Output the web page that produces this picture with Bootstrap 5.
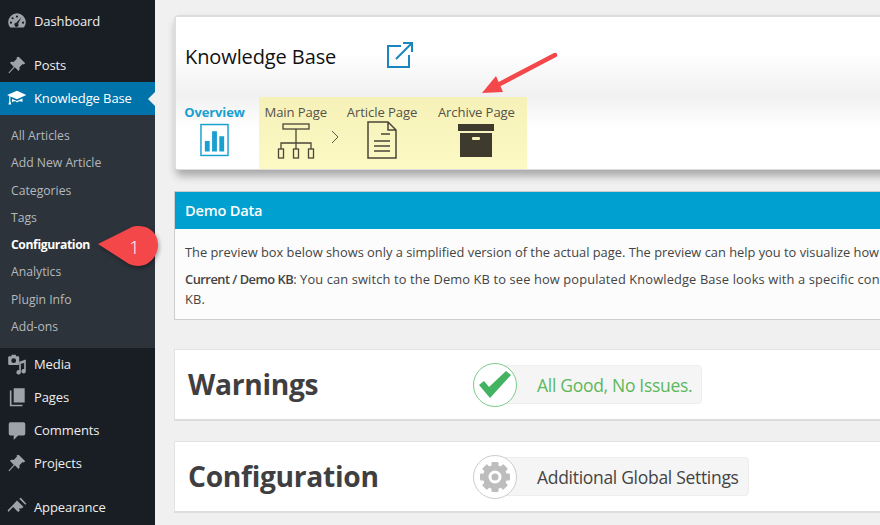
<!DOCTYPE html>
<html lang="en">
<head>
<meta charset="UTF-8">
<title>Knowledge Base</title>
<link href="https://cdn.jsdelivr.net/npm/bootstrap@5.3.0/dist/css/bootstrap.min.css" rel="stylesheet">
<style>
html, body { height: 525px; overflow: hidden; }
body { background: #f0f0f0; font-family: "Open Sans", "Liberation Sans", sans-serif; color: #444; }
.page-wrap { position: relative; width: 880px; height: 525px; overflow: hidden; }
.wp-side { width: 155px; height: 525px; flex: none; background: #191e24; padding-top: 5px; }
.wp-item { height: 33px; color: #eee; font-size: 13px; padding-left: 34px; position: relative; display: flex; align-items: center; letter-spacing: -.1px; }
.wp-item svg { position: absolute; left: 6px; top: 5px; width: 22px; height: 22px; fill: #9ea3a8; }
.wp-gap { margin-top: 11px; }
.wp-current { background: #0073aa; color: #fff; }
.wp-current svg { fill: #fff; }
.wp-current::after { content: ""; position: absolute; right: 0; top: 10px; border: 7px solid transparent; border-left: 0; border-right: 7px solid #f0f0f0; }
.wp-sub { background: #2c333b; height: 233px; padding-top: 7px; }
.wp-sub a { display: block; height: 27.3px; line-height: 27px; padding-left: 11px; font-size: 12.2px; color: #b4b9be; text-decoration: none; }
.wp-sub a.on { color: #fff; font-weight: 700; letter-spacing: -.4px; }
.main-col { width: 800px; flex: none; padding: 15px 0 0 19px; }
.kb-box { background: #fff; border: 2px solid #ddd; border-right: 0; border-radius: 5px 0 0 5px; height: 155px; box-shadow: 2px 6px 8px rgba(0,0,0,.3); }
.kb-head { height: 80px; background: linear-gradient(#fff 45%, #f0f0f0); padding-left: 9px; padding-bottom: 1px; }
.kb-title { font-size: 20px; color: #111; width: 201px; letter-spacing: -.1px; }
.ext-ico { margin-bottom: 3px; }
.kb-tabs { height: 72px; background: linear-gradient(#f2f2f2, #fff 45%); }
.tab-over { width: 83px; text-align: center; padding: 8px 6px 0 0; }
.tab-over b { display: block; font-size: 13px; color: #1a9fd1; letter-spacing: -.1px; line-height: 15px; margin-bottom: 3px; }
.tab-yellow { width: 268px; background: linear-gradient(#f5f1b8, #fdf9c4); height: 72px; padding: 8px 5px 0; color: #55524a; font-size: 13.1px; line-height: 15px; letter-spacing: -.1px; }
.tab-one { text-align: center; white-space: nowrap; }
.tab-one svg { display: block; margin: 3px auto 0; }
.tab-one .doc-ico { margin-top: 1px; }
.tab-sep { width: 19px; padding-left: 4px; }
.demo-box { margin-top: 21px; background: #fcfcfc; border: 1px solid #ccc; border-right: 0; height: 129px; }
.demo-head { background: #00a0d0; color: #fff; height: 37px; line-height: 37px; padding-left: 10px; font-size: 14.6px; font-weight: 600; letter-spacing: -.2px; }
.demo-body { padding: 13px 0 0 10px; font-size: 12.85px; line-height: 20px; color: #444; white-space: nowrap; }
.demo-body p { margin: 0 0 7px; }
.demo-body .demo-two { letter-spacing: .13px; }
.demo-two b { letter-spacing: -.5px; }
.sect-box { background: #fff; border: 1px solid #e2e2e2; border-bottom: 2px solid #ddd; border-right: 0; height: 72px; margin-top: 29px; padding-left: 13px; }
.sect-box + .sect-box { margin-top: 20px; }
.sect-title { font-size: 28.2px; font-weight: 700; color: #3f3f42; width: 285px; letter-spacing: -.3px; }
.pill-wrap { position: relative; height: 44px; display: flex; align-items: center; }
.pill-circ { width: 44px; height: 44px; border-radius: 50%; background: #fff; border: 1px solid #ccc; display: flex; align-items: center; justify-content: center; position: relative; z-index: 1; flex: none; }
.pill-text { background: #f5f5f5; border: 1px solid #eee; border-radius: 4px; height: 39px; line-height: 38px; font-size: 17.5px; margin-left: -22px; padding: 0 9px 0 41px; letter-spacing: -.3px; }
.txt-green { color: #5cb85c; }
.circ-green { border-color: #7ccb8a; }
.callout { position: absolute; left: 97px; top: 226px; filter: drop-shadow(1px 2px 2px rgba(0,0,0,.35)); }
.callout-num { position: absolute; left: 129px; top: 234px; color: #fff; font-size: 19px; line-height: 26px; font-weight: 300; }
.red-arrow { position: absolute; left: 480px; top: 50px; }
</style>
</head>
<body>
<div class="page-wrap d-flex">
  <div class="wp-side">
    <div class="wp-item">
      <svg viewBox="0 0 20 20"><path fill-rule="evenodd" d="M10 3a8 8 0 0 0-8 8c0 2 .7 3.800 2 5h12c1.300-1.200 2-3 2-5a8 8 0 0 0-8-8zM6 6.500a1 1 0 1 1 0 2 1 1 0 0 1 0-2zm4-1.500a1 1 0 1 1 0 2 1 1 0 0 1 0-2zM4.500 10.500a1 1 0 1 1 0 2 1 1 0 0 1 0-2zm11 0a1 1 0 1 1 0 2 1 1 0 0 1 0-2zM14 6.500l-3 6a1.800 1.800 0 1 1-1.600-.8z"/></svg>
      Dashboard
    </div>
    <div class="wp-item wp-gap">
      <svg viewBox="0 0 20 20"><path d="M11.500 2.500l6 6-1.300 1-1-.5-3 3c.5 2-.2 3-.7 3.500L8 12l-5 5.500-.8-.5 4.800-5.500-3.500-3.500c.5-.5 1.700-1.200 3.500-.8l3-3-.5-1z"/></svg>
      Posts
    </div>
    <div class="wp-item wp-current">
      <svg viewBox="0 0 20 20"><path d="M10 3.500L1 7.200l2 .9V13l-.8 3h2.600L4 13V8.600l6 2.600 8.500-4z"/><path d="M5.500 10.800v3c2-1.300 3.500-.9 4.500.4 1.500-1.300 3-1.600 5-.6v-3.200l-5 2.300z"/></svg>
      Knowledge Base
    </div>
    <div class="wp-sub">
      <a href="#">All Articles</a>
      <a href="#">Add New Article</a>
      <a href="#">Categories</a>
      <a href="#">Tags</a>
      <a href="#" class="on">Configuration</a>
      <a href="#">Analytics</a>
      <a href="#">Plugin Info</a>
      <a href="#">Add-ons</a>
    </div>
    <div class="wp-item">
      <svg viewBox="0 0 20 20"><path fill-rule="evenodd" d="M3 3h2V1.500h4V3h2a1 1 0 0 1 1 1v6a1 1 0 0 1-1 1H3a1 1 0 0 1-1-1V4a1 1 0 0 1 1-1zm4 1.800a2.200 2.200 0 1 0 0 4.400 2.200 2.200 0 0 0 0-4.400z"/><path d="M18 6v10.500a2 2 0 1 1-1.500-1.900V9l-3 .8v7.700a2 2 0 1 1-1.500-1.900V8z"/></svg>
      Media
    </div>
    <div class="wp-item">
      <svg viewBox="0 0 20 20"><path d="M7 2h10v13H7zM5 4v13h10v1.500H3.500V4z"/></svg>
      Pages
    </div>
    <div class="wp-item">
      <svg viewBox="0 0 20 20"><path d="M4 3h12a1.500 1.500 0 0 1 1.500 1.500v9A1.500 1.500 0 0 1 16 15h-5l-4 4v-4H4a1.500 1.500 0 0 1-1.500-1.500v-9A1.500 1.500 0 0 1 4 3z"/></svg>
      Comments
    </div>
    <div class="wp-item">
      <svg viewBox="0 0 20 20"><path d="M11.500 2.500l6 6-1.300 1-1-.5-3 3c.5 2-.2 3-.7 3.500L8 12l-5 5.500-.8-.5 4.800-5.500-3.500-3.500c.5-.5 1.700-1.200 3.500-.8l3-3-.5-1z"/></svg>
      Projects
    </div>
    <div class="wp-item wp-gap">
      <svg viewBox="0 0 20 20"><path d="M10 4l6 6-2.500 1.500-1.500-.5.500 2.500-1.500 1-4.500-4.500-4.500 4.500L1.500 13 6 8.500 10 4zM12 2.500l5.500 5.500 1-1L13.500 1.500z"/></svg>
      Appearance
    </div>
  </div>

  <div class="main-col">
    <div class="kb-box">
      <div class="kb-head d-flex align-items-center">
        <div class="kb-title">Knowledge Base</div>
        <svg class="ext-ico" width="28" height="28" viewBox="0 0 28 28" fill="none" stroke="#1a86c0" stroke-width="2"><path d="M15 5H2v21h21V14"/><path d="M10 18L26 2M17 2h9v9"/></svg>
      </div>
      <div class="kb-tabs d-flex">
        <div class="tab-over">
          <b>Overview</b>
          <svg width="29" height="34" viewBox="0 0 30 34"><rect x="1" y="1" width="28" height="32" fill="#fff" stroke="#1a9fd1" stroke-width="1.500"/><path fill="#1a9fd1" d="M5 18h5v11H5zM12.500 8h5v21h-5zM20 13h5v16h-5z"/></svg>
        </div>
        <div class="tab-yellow d-flex">
          <div class="tab-one" style="width:64px">Main Page
            <svg width="38" height="36" viewBox="0 0 38 36" fill="none" stroke="#4a4538" stroke-width="1.300"><rect x="6" y="1" width="26" height="5"/><path d="M19 6v14M4 26v-6h30v6M19 20v6"/><rect x="1.500" y="26" width="5" height="9"/><rect x="16.500" y="26" width="5" height="9"/><rect x="31.500" y="26" width="5" height="9"/></svg>
          </div>
          <div class="tab-sep d-flex align-items-center">
            <svg width="9" height="14" viewBox="0 0 9 14" fill="none" stroke="#5a5648"><path d="M1 1l6 6-6 6"/></svg>
          </div>
          <div class="tab-one" style="width:72px">Article Page
            <svg class="doc-ico" width="30" height="38" viewBox="0 0 30 38" fill="none" stroke="#4a4538" stroke-width="1.500"><path d="M1 1h20l8 8v28H1zM21 1v8h8M14 13h9M7 20h16M7 25h16M7 30h16"/></svg>
          </div>
          <div class="tab-one" style="width:105px;padding-left:13px">Archive Page
            <svg width="36" height="34" viewBox="0 0 36 34"><path fill="#3f3a2e" d="M0 1h36v7H0zM2 10h32v24H2z"/><rect x="14" y="14" width="8" height="3" rx="1" fill="#f5f1b8"/></svg>
          </div>
        </div>
      </div>
    </div>

    <div class="demo-box">
      <div class="demo-head">Demo Data</div>
      <div class="demo-body">
        <p>The preview box below shows only a simplified version of the actual page. The preview can help you to visualize how</p>
        <p class="demo-two"><b class="fw-semibold">Current / Demo KB</b>: You can switch to the Demo KB to see how populated Knowledge Base looks with a specific con<br>KB.</p>
      </div>
    </div>

    <div class="sect-box d-flex align-items-center">
      <div class="sect-title">Warnings</div>
      <div class="pill-wrap">
        <div class="pill-circ circ-green">
          <svg width="32" height="27" viewBox="0 0 32 27"><path fill="#43b261" d="M0 14l5-4 5 6L27 0l5 4-21 23z"/></svg>
        </div>
        <div class="pill-text txt-green">All Good, No Issues.</div>
      </div>
    </div>
    <div class="sect-box d-flex align-items-center">
      <div class="sect-title">Configuration</div>
      <div class="pill-wrap">
        <div class="pill-circ">
          <svg width="32" height="32" viewBox="0 0 32 32">
            <g fill="#bdbdbd">
              <circle cx="16" cy="16" r="12"/>
              <rect x="12.500" y="1" width="7" height="30" rx="1"/>
              <rect x="12.500" y="1" width="7" height="30" rx="1" transform="rotate(45 16 16)"/>
              <rect x="12.500" y="1" width="7" height="30" rx="1" transform="rotate(90 16 16)"/>
              <rect x="12.500" y="1" width="7" height="30" rx="1" transform="rotate(135 16 16)"/>
            </g>
            <circle cx="16" cy="16" r="6.500" fill="#fff"/>
            <circle cx="16" cy="16" r="3.500" fill="#bdbdbd"/>
          </svg>
        </div>
        <div class="pill-text">Additional Global Settings</div>
      </div>
    </div>
  </div>

  <svg class="callout" width="64" height="44" viewBox="0 0 64 44"><path fill="#f4474a" d="M1 18L33 2C36 0 40 0 42 0c12 0 19 9 19 19s-8 21-20 21c-3 0-6-1-9-2z"/></svg>
  <div class="callout-num">1</div>
  <svg class="red-arrow" width="80" height="50" viewBox="0 0 80 50"><path fill="none" stroke="#f4474a" stroke-width="4.500" stroke-linecap="round" d="M75 5L14 37"/><path fill="#f4474a" d="M2 43L16 26 23 42z"/></svg>
</div>
</body>
</html>
